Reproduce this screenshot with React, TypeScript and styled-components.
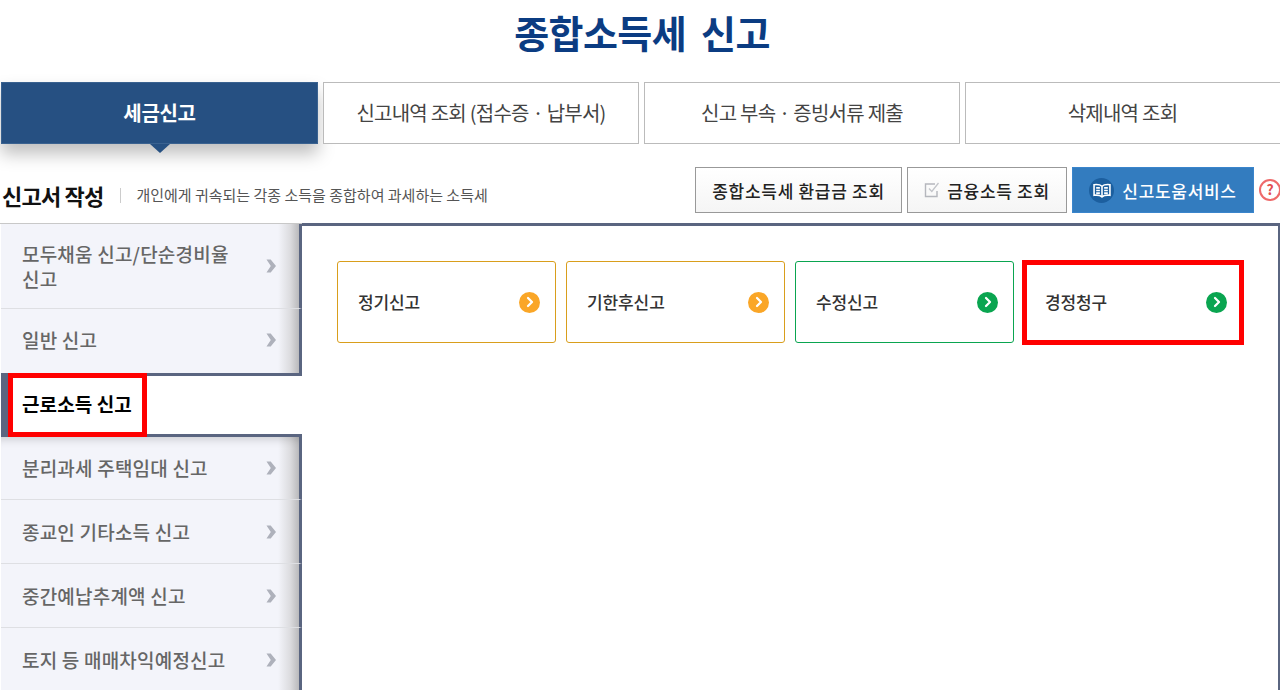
import styled, { createGlobalStyle } from "styled-components";
import { ChevronRight } from "lucide-react";

const GlobalStyle = createGlobalStyle`
  html, body {
    margin: 0;
    height: 690px;
    overflow: hidden;
    background: #fff;
    font-family: "Noto Sans CJK KR", "Noto Sans", sans-serif;
  }
  * {
    box-sizing: border-box;
  }
`

const Page = styled.div`
  width: 1280px;
  height: 690px;
  overflow: hidden;
`

const Title = styled.h1`
  height: 82px;
  margin: 0;
  padding: 0 0 20px 4px;
  display: flex;
  align-items: center;
  justify-content: center;
  font-size: 38px;
  font-weight: 700;
  letter-spacing: -0.6px;
  word-spacing: 7px;
  color: #0b3c82;
`

const Tabs = styled.div`
  display: flex;
  gap: 5px;
  padding-left: 1px;
  width: 1290px;
`

const Tab = styled.div<{ $active?: boolean }>`
  position: relative;
  width: 316px;
  height: 62px;
  padding-bottom: 2px;
  display: flex;
  align-items: center;
  justify-content: center;
  font-size: 20px;
  letter-spacing: ${(p) => (p.$active ? "-0.3px" : "-0.75px")};
  font-weight: ${(p) => (p.$active ? 700 : 400)};
  color: ${(p) => (p.$active ? "#fff" : "#444")};
  background: ${(p) => (p.$active ? "#265082" : "#fff")};
  border: 1px solid ${(p) => (p.$active ? "#3a6290" : "#bbb")};
  box-shadow: ${(p) => (p.$active ? "0 10px 16px rgba(0,0,0,.25)" : "none")};

  &:first-child {
    width: 317px;
  }
  &:last-child {
    width: 325px;
    padding-right: 10px;
  }
`

const TabArrow = styled.span`
  position: absolute;
  left: 148px;
  top: 61px;
  width: 0;
  height: 0;
  border-left: 10px solid transparent;
  border-right: 10px solid transparent;
  border-top: 9px solid #265082;
`

const HeaderRow = styled.div`
  height: 79px;
  display: flex;
  align-items: flex-start;
  padding-top: 23px;
  padding-left: 2px;
`

const SectionTitle = styled.h2`
  margin: 0 17px 0 0;
  font-size: 22px;
  line-height: 30px;
  padding-top: 13px;
  font-weight: 700;
  letter-spacing: -0.8px;
  color: #111;
`

const Description = styled.p`
  margin: 21px 0 0;
  padding-left: 15px;
  height: 15px;
  line-height: 14px;
  border-left: 1px solid #ccc;
  font-size: 15px;
  letter-spacing: 0;
  color: #555;
  flex: 1;
`

const HeaderButton = styled.button<{ $width: number }>`
  width: ${(p) => p.$width}px;
  height: 46px;
  margin-right: 5px;
  padding: 0;
  display: flex;
  align-items: center;
  justify-content: center;
  gap: 7px;
  font-family: inherit;
  font-size: 17px;
  font-weight: 500;
  letter-spacing: 0.7px;
  color: #222;
  background: linear-gradient(#fff, #f5f5f5);
  border: 1px solid #999;
`

const HelpButton = styled(HeaderButton)`
  color: #fff;
  background: #337cbf;
  border: 1px solid #3a85cc;
  gap: 8px;
`

const BookBadge = styled.span`
  width: 25px;
  height: 25px;
  border-radius: 50%;
  background: #1c5f9f;
  display: flex;
  align-items: center;
  justify-content: center;
`

const QuestionMark = styled.span`
  width: 22px;
  height: 22px;
  flex: none;
  margin: 12px -1px 0 0;
  border: 2px solid #ee6a6a;
  border-radius: 50%;
  color: #e24f4f;
  font-size: 14px;
  font-weight: 700;
  line-height: 17px;
  text-align: center;
`

const Body = styled.div`
  display: flex;
  align-items: stretch;
  height: 467px;
`

const Sidebar = styled.ul`
  width: 302px;
  flex: none;
  margin: 0;
  padding: 0 0 0 1px;
  list-style: none;
  position: relative;
  z-index: 1;
  border-top: 1px solid #c8c8c8;
`

const MenuItem = styled.li<{ $tall?: boolean }>`
  height: ${(p) => (p.$tall ? 85 : 64)}px;
  padding: 0 23px 0 21px;
  display: flex;
  align-items: center;
  justify-content: space-between;
  font-size: 19px;
  line-height: 25px;
  font-weight: 500;
  letter-spacing: 0.2px;
  color: #666;
  background: linear-gradient(to right, #f3f4fa 93%, #dcdcdf 97%, #b9b9bb 100%);
  border-bottom: 1px solid #dedfe3;
  border-right: 3px solid #5a6580;

  &:nth-child(2) {
    height: 67px;
    padding-bottom: 3px;
    border-bottom: 3px solid #5a6580;
  }
  &:nth-child(4) {
    height: 66px;
    padding-bottom: 1px;
    border-top: 3px solid #5a6580;
    box-shadow: inset 0 10px 10px -8px rgba(0, 0, 0, .18);
  }
`

const ActiveItem = styled.li`
  position: relative;
  height: 58px;
  margin-right: -1px;
  padding: 0 0 3px 14px;
  display: flex;
  align-items: center;
  font-size: 19px;
  font-weight: 700;
  letter-spacing: 0.1px;
  color: #000;
  background: #fff;
  border-left: 7px solid #5a6580;
`

const MenuLabel = styled.span`
  max-width: 215px;
`

const MenuArrow = styled.svg`
  width: 10px;
  height: 14px;
  flex: none;
`

const ItemHighlight = styled.span`
  position: absolute;
  left: 0;
  top: -3px;
  width: 139px;
  height: 64px;
  border: 5px solid #f00;
`

const Panel = styled.main`
  flex: 1;
  margin-left: -3px;
  padding: 35px 35px 0 38px;
  display: flex;
  align-items: flex-start;
  gap: 10px;
  background: #fff;
  border-top: 3px solid #5a6580;
  border-right: 2px solid #5a6580;
`

const Card = styled.div<{ $color: string }>`
  position: relative;
  width: 219px;
  height: 82px;
  padding: 0 15px 0 20px;
  display: flex;
  align-items: center;
  justify-content: space-between;
  font-size: 17px;
  font-weight: 500;
  letter-spacing: -0.1px;
  color: #333;
  background: #fff;
  border: 1px solid ${(p) => p.$color};
  border-radius: 3px;
`

const CardLabel = styled.span`
  margin-top: -2px;
`

const CardArrow = styled.span<{ $color: string }>`
  width: 21px;
  height: 21px;
  border-radius: 50%;
  background: ${(p) => p.$color};
  color: #fff;
  display: flex;
  align-items: center;
  justify-content: center;
`

const CardHighlight = styled.span`
  position: absolute;
  inset: -2px -2px -3px -3px;
  border: 5px solid #f00;
`

const menuBefore = ["모두채움 신고/단순경비율 신고", "일반 신고"]
const menuAfter = ["분리과세 주택임대 신고", "종교인 기타소득 신고", "중간예납추계액 신고", "토지 등 매매차익예정신고"]

const orange = { line: "#d99e1c", dot: "#faa627" }
const green = { line: "#0aa550", dot: "#0aa550" }

const cards = [
  { name: "정기신고", ...orange },
  { name: "기한후신고", ...orange },
  { name: "수정신고", ...green },
  { name: "경정청구", ...green, marked: true },
]

const Chevron = () => (
  <MenuArrow viewBox="0 0 10 14">
    <path d="M0.5 0.5h4.2L10 7l-5.3 6.5H0.5L4.8 7z" fill="#aeb1bb" />
  </MenuArrow>
)

const App = () => {
  return (
    <Page>
      <GlobalStyle />
      <Title>종합소득세 신고</Title>
      <Tabs>
        <Tab $active>
          세금신고
          <TabArrow />
        </Tab>
        <Tab>신고내역 조회 (접수증 · 납부서)</Tab>
        <Tab>신고 부속 · 증빙서류 제출</Tab>
        <Tab>삭제내역 조회</Tab>
      </Tabs>
      <HeaderRow>
        <SectionTitle>신고서 작성</SectionTitle>
        <Description>개인에게 귀속되는 각종 소득을 종합하여 과세하는 소득세</Description>
        <HeaderButton $width={207}>종합소득세 환급금 조회</HeaderButton>
        <HeaderButton $width={160}>
          <svg width="16" height="16" viewBox="0 0 16 16" fill="none">
            <path d="M13 9v5.5H1.5V2H11" stroke="#b5b7bd" strokeWidth="1.4" />
            <path d="M5 6.5l2.8 3L14.5 1" stroke="#c3c5ca" strokeWidth="1.3" />
          </svg>
          금융소득 조회
        </HeaderButton>
        <HelpButton $width={182}>
          <BookBadge>
            <svg width="18" height="15" viewBox="0 0 17 14" fill="none" stroke="#fff" strokeWidth="1.5">
              <path d="M8.5 3C7 1.6 4 1.2 1 1.5v10c3-.3 6 .1 7.5 1.5 1.5-1.4 4.5-1.8 7.5-1.5v-10C13 1.2 10 1.6 8.5 3z" />
              <path d="M8.5 3v10M3 4.5h3.5M3 7h3.5M3 9.5h3.5M10.5 4.5H14M10.5 7H14M10.5 9.5H14" />
            </svg>
          </BookBadge>
          신고도움서비스
        </HelpButton>
        <QuestionMark>?</QuestionMark>
      </HeaderRow>
      <Body>
        <Sidebar>
          {menuBefore.map((name, i) => (
            <MenuItem key={name} $tall={i === 0}>
              <MenuLabel>{name}</MenuLabel>
              <Chevron />
            </MenuItem>
          ))}
          <ActiveItem>
            근로소득 신고
            <ItemHighlight />
          </ActiveItem>
          {menuAfter.map((name) => (
            <MenuItem key={name}>
              <MenuLabel>{name}</MenuLabel>
              <Chevron />
            </MenuItem>
          ))}
        </Sidebar>
        <Panel>
          {cards.map((card) => (
            <Card key={card.name} $color={card.line}>
              <CardLabel>{card.name}</CardLabel>
              <CardArrow $color={card.dot}>
                <ChevronRight size={16} strokeWidth={3.4} />
              </CardArrow>
              {card.marked && <CardHighlight />}
            </Card>
          ))}
        </Panel>
      </Body>
    </Page>
  )
}

export default App;
